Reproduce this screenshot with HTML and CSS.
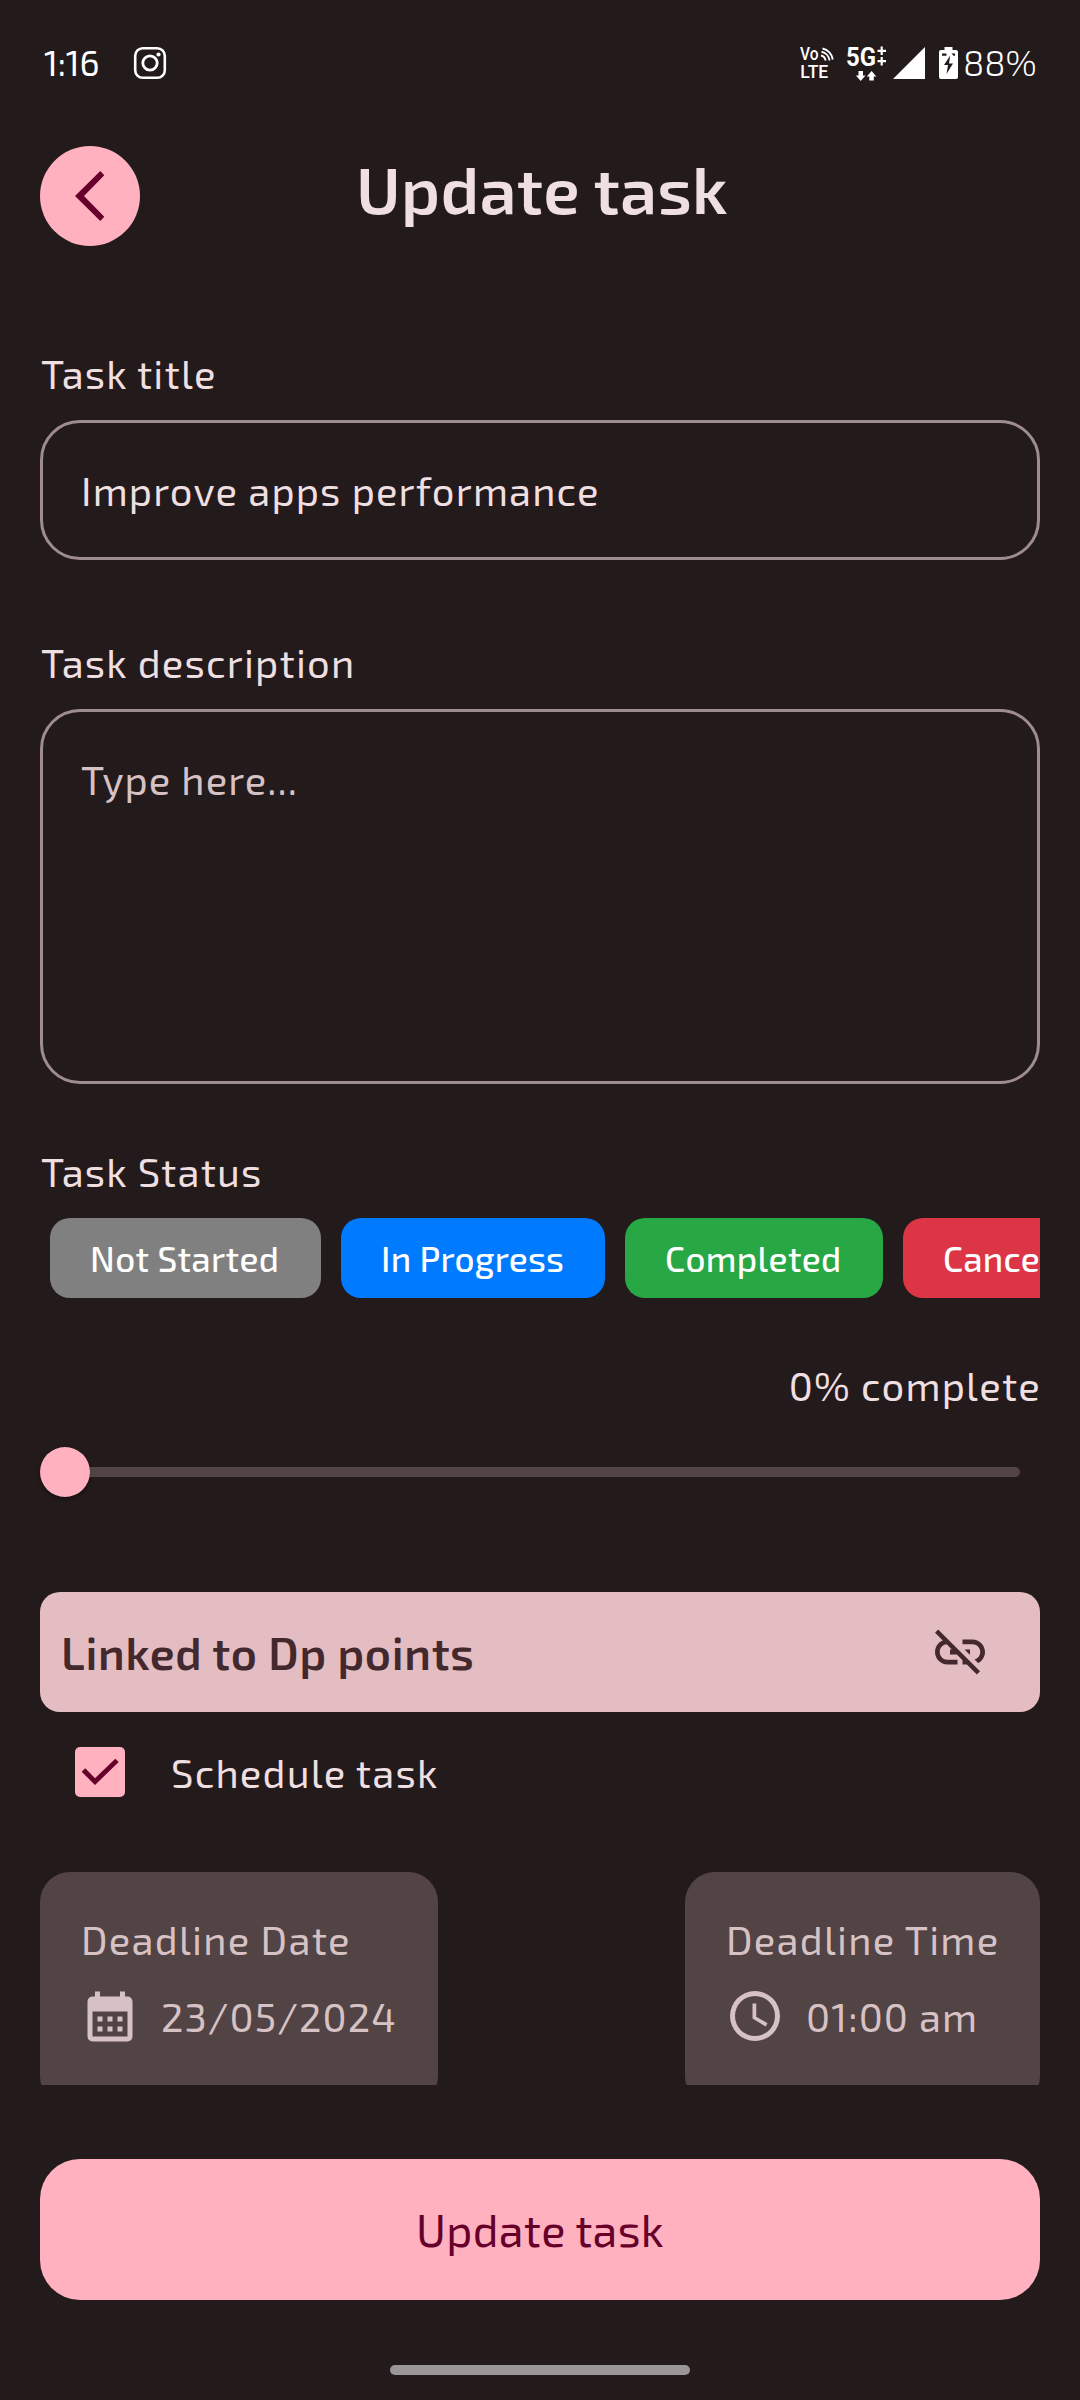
FILE: index.html
```html
<!DOCTYPE html>
<html lang="en">
<head>
<meta charset="utf-8">
<title>Update task</title>
<link rel="stylesheet" href="styles.css">
</head>
<body>
<div class="statusbar">
  <div class="status-left">
    <span class="clock">1:16</span>
    <svg class="insta" viewBox="0 0 32 32" fill="none" stroke="#fff">
      <rect x="1.2" y="1.2" width="29.6" height="29.6" rx="7.6" stroke-width="2.6"/>
      <circle cx="16" cy="16" r="7.2" stroke-width="2.8"/>
      <circle cx="24.5" cy="7.500" r="2.100" fill="#fff" stroke="none"/>
    </svg>
  </div>
  <div class="status-right">
    <svg class="volte" viewBox="0 0 35 32">
      <text class="tiny" x="0" y="13" textLength="18.500" lengthAdjust="spacingAndGlyphs">Vo</text>
      <text class="tiny" x="0.300" y="31" textLength="28" lengthAdjust="spacingAndGlyphs">LTE</text>
      <g fill="none" stroke="#fff" stroke-width="1.900">
        <path d="M21 8.500a6 6 0 0 1 4.600 5"/>
        <path d="M21.500 4.800a10 10 0 0 1 8 8.700"/>
        <path d="M22.500 1.500a13 13 0 0 1 10.300 11"/>
      </g>
    </svg>
    <svg class="fiveg" viewBox="0 0 42 36">
      <text class="gen" x="0" y="20" textLength="30" lengthAdjust="spacingAndGlyphs">5G</text>
      <path d="M35.700 0.500v8.500M35.700 11v8.500M31.500 4.800h8.500M31.500 15.200h8.500" stroke="#fff" stroke-width="2.200" fill="none"/>
      <path d="M12.500 25h4.500v4.500h2.500l-4.800 5.500-4.800-5.500h2.600zM25.600 25l4.700 5.500h-2.500v4h-4.500v-4h-2.500z" fill="#fff"/>
    </svg>
    <svg class="signal" viewBox="0 0 32 32"><path d="M32 0v32H0z" fill="#fff"/></svg>
    <svg class="battery" viewBox="0 0 19 32">
      <path d="M5.500 0h8v3H17q2 0 2 2v25q0 2-2 2H2q-2 0-2-2V5q0-2 2-2h3.500z" fill="#fff"/>
      <path d="M3 6.500h4.500v2.200H3zM12.500 6.500H16v2.200h-1.500zM11.200 8.500L5 18h4l-1.500 9 6.500-10.500h-4z" fill="#231a1b"/>
    </svg>
    <span class="percent">88%</span>
  </div>
</div>

<header class="header">
  <button class="back" aria-label="Back">
    <svg viewBox="0 0 100 100"><path d="M35 50L60.300 25l4 4.300L44 50l20.300 20.700-4 4.300z"/></svg>
  </button>
  <h1 class="title">Update task</h1>
</header>

<main class="form">
  <div class="label label-title">Task title</div>
  <div class="field field-title"><span>Improve apps performance</span></div>

  <div class="label label-desc">Task description</div>
  <div class="field field-desc"><span>Type here...</span></div>

  <div class="label label-status">Task Status</div>
  <div class="pills">
    <div class="pill pill-idle">Not Started</div>
    <div class="pill pill-progress">In Progress</div>
    <div class="pill pill-done">Completed</div>
    <div class="pill pill-cancel">Cancelled</div>
  </div>

  <div class="label complete">0% complete</div>
  <div class="slider"><div class="thumb"></div><div class="track"></div></div>

  <div class="linked">
    <span>Linked to Dp points</span>
    <svg viewBox="0 0 24 24"><path d="M17 7h-4v1.900h4c1.710 0 3.100 1.390 3.100 3.100 0 1.430-.98 2.630-2.310 2.980l1.460 1.460C20.880 15.610 22 13.950 22 12c0-2.760-2.240-5-5-5zm-1 4h-2.190l2 2H16zM2 4.270l3.110 3.110C3.290 8.120 2 9.910 2 12c0 2.760 2.240 5 5 5h4v-1.900H7c-1.710 0-3.100-1.390-3.100-3.100 0-1.590 1.210-2.900 2.760-3.070L8.730 11H8v2h2.730L13 15.270V17h1.730l4.010 4L20 19.740 3.270 3 2 4.270z"/></svg>
  </div>

  <div class="schedule">
    <div class="checkbox"><svg viewBox="0 0 50 50"><path d="M6.700 24.700l3.600-3.400L20 31.300l20.300-19.600 3.400 3.300L20 38z"/></svg></div>
    <span>Schedule task</span>
  </div>

  <div class="cards">
    <div class="card card-date">
      <div class="card-label">Deadline Date</div>
      <div class="card-row">
        <svg class="cal" viewBox="0 0 24 24"><path d="M9 11v2H7v-2h2m4 0v2h-2v-2h2m4 0v2h-2v-2h2m2-8a2 2 0 0 1 2 2v14a2 2 0 0 1-2 2H5a2 2 0 0 1-2-2V5a2 2 0 0 1 2-2h1V1h2v2h8V1h2v2h1m0 16V9H5v10h14M9 15v2H7v-2h2m4 0v2h-2v-2h2m4 0v2h-2v-2h2z"/></svg>
        <span>23/05/2024</span>
      </div>
    </div>
    <div class="card card-time">
      <div class="card-label">Deadline Time</div>
      <div class="card-row">
        <svg viewBox="0 0 24 24"><path d="M12 20a8 8 0 0 0 8-8 8 8 0 0 0-8-8 8 8 0 0 0-8 8 8 8 0 0 0 8 8m0-18a10 10 0 0 1 10 10 10 10 0 0 1-10 10A10 10 0 0 1 2 12 10 10 0 0 1 12 2m.5 5v5.250l4.500 2.670-.75 1.230L11 13V7z"/></svg>
        <span>01:00 am</span>
      </div>
    </div>
  </div>
</main>

<footer class="footer">
  <button class="submit">Update task</button>
  <div class="nav-handle"></div>
</footer>
</body>
</html>
```
FILE: styles.css
```css
* { box-sizing: border-box; }

body {
  margin: 0;
  width: 1080px;
  height: 2400px;
  overflow: hidden;
  display: flex;
  flex-direction: column;
  background: #231a1b;
  color: #efdfe1;
  font: 400 40px/48px "Exo 2", Roboto, sans-serif;
}

button { border: 0; padding: 0; font: inherit; }
svg { display: block; flex: none; overflow: visible; }

/* Status bar */
.statusbar {
  height: 126px;
  padding: 0 44px;
  display: flex;
  justify-content: space-between;
  align-items: center;
  color: #fff;
}
.status-left, .status-right { display: flex; align-items: center; }
.clock { width: 90px; font-size: 35px; letter-spacing: -.2px; padding-bottom: 2px; }
.insta { width: 32px; height: 32px; }
.volte { width: 35px; height: 32px; margin-right: 11px; }
.fiveg { width: 42px; height: 36px; margin: 2px 5px 0 0; }
.signal { width: 32px; height: 32px; margin-right: 14px; }
.battery { width: 19px; height: 32px; margin-right: 5px; }
.percent { width: 73px; font-size: 35px; font-weight: 300; padding-bottom: 2px; white-space: nowrap; }
.tiny { font: 500 17.500px Roboto, sans-serif; fill: #fff; }
.gen { font: 700 26px Roboto, sans-serif; fill: #fff; }

/* Header */
.header {
  height: 100px;
  margin: 20px 40px 0;
  display: grid;
  grid-template-columns: 100px 1fr 100px;
  align-items: center;
}
.back { width: 100px; height: 100px; border-radius: 50%; background: #ffb1c0; fill: #66002b; }
.title {
  margin: 0;
  padding: 0 0 16px 4px;
  text-align: center;
  font-size: 66px;
  line-height: 80px;
  font-weight: 600;
  letter-spacing: .3px;
}

/* Form */
.form { height: 1839px; padding: 0 40px; overflow: hidden; flex: none; }
.label { height: 48px; padding-left: 1px; white-space: nowrap; letter-spacing: 1.200px; }
.label-title { margin-top: 103px; }
.label-desc { margin-top: 78px; }
.label-status { margin-top: 63px; }

.field { margin-top: 23px; border: 3px solid #9f8c8f; border-radius: 40px; }
.field-title { height: 140px; padding: 43px 38px 0; letter-spacing: 1.150px; }
.field-desc { height: 375px; padding: 43px 38px 0; letter-spacing: 1.050px; color: #d6c2c4; }

.pills {
  margin-top: 23px;
  padding-left: 10px;
  display: flex;
  gap: 20px;
  overflow: hidden;
  color: #fff;
  font-weight: 500;
  font-size: 35px;
  letter-spacing: .35px;
}
.pill { flex: none; height: 80px; line-height: 80px; border-radius: 20px; padding-left: 40px; white-space: nowrap; }
.pill-idle { width: 271px; background: #808080; }
.pill-progress { width: 264px; background: #007bff; letter-spacing: .25px; }
.pill-done { width: 258px; background: #28a745; }
.pill-cancel { width: 250px; background: #dc3545; letter-spacing: .2px; }

.complete { margin: 63px -1px 0 0; text-align: right; }
.slider { margin-top: 38px; height: 50px; display: flex; align-items: center; }
.thumb { width: 50px; height: 50px; border-radius: 50%; background: #ffb1c0; box-shadow: 0 2px 4px rgba(0, 0, 0, .4); }
.track { width: 930px; height: 10px; background: #524344; border-radius: 0 5px 5px 0; }

.linked {
  margin-top: 95px;
  height: 120px;
  padding: 0 50px 0 21px;
  border-radius: 20px;
  display: flex;
  justify-content: space-between;
  align-items: center;
  background: #e4bdc2;
  color: #43292d;
  fill: #43292d;
  font-size: 45px;
  font-weight: 600;
  letter-spacing: .75px;
}
.linked svg { width: 60px; height: 60px; }

.schedule { margin-top: 35px; height: 50px; padding-left: 35px; display: flex; align-items: center; gap: 46px; letter-spacing: 1.200px; }
.checkbox { width: 50px; height: 50px; border-radius: 5px; background: #ffb1c0; fill: #66002b; }

.cards { margin-top: 75px; display: flex; justify-content: space-between; color: #d6c2c4; fill: #d6c2c4; white-space: nowrap; letter-spacing: 1.250px; }
.card { height: 234px; padding: 43px 0 0 40px; border-radius: 30px; background: #524344; }
.card-date { width: 398px; }
.card-time { width: 355px; }
.card-label { padding-left: 1px; }
.card-row { margin-top: 23px; display: flex; align-items: center; gap: 21px; letter-spacing: 1.050px; }
.card-row svg { width: 60px; height: 60px; }
.card-row .cal { margin: 3px 0 -3px; }

/* Footer */
.footer { padding: 74px 40px 0; display: flex; flex-direction: column; align-items: center; }
.submit {
  width: 1000px;
  height: 141px;
  padding-bottom: 1px;
  border-radius: 40px;
  background: #ffb1c0;
  color: #66002b;
  font-size: 45px;
  font-weight: 450;
  letter-spacing: .3px;
}
.nav-handle { margin-top: 65px; width: 300px; height: 10px; border-radius: 5px; background: #9b9697; }
```
